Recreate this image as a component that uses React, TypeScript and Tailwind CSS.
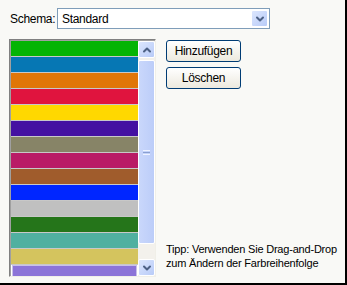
import { ChevronDown, ChevronUp } from 'lucide-react'

const colors = [
  '#04b404',
  '#0677b4',
  '#e07608',
  '#e0143e',
  '#ffd800',
  '#4410a2',
  '#878467',
  '#b91b66',
  '#a05c2c',
  '#0026ff',
  '#c0c0c0',
  '#25751a',
  '#50b0a0',
  '#d4c45e',
  '#8c74d8',
]

const XpButton = ({ label }: { label: string }) => (
  <button className="flex h-[22px] w-[75px] items-center justify-center rounded-[3px] border border-[#003c74] bg-gradient-to-b from-white to-[#ece9de] text-[12px] tracking-[-0.3px] text-black">
    {label}
  </button>
)

const ArrowBox = ({ down }: { down?: boolean }) => (
  <div className="flex h-[17px] w-[17px] shrink-0 items-center justify-center rounded-[2px] border border-white bg-gradient-to-br from-[#dce6fd] to-[#b8cbf8]">
    {down ? (
      <ChevronDown className="size-3 text-[#4d6185]" strokeWidth={4} />
    ) : (
      <ChevronUp className="size-3 text-[#4d6185]" strokeWidth={4} />
    )}
  </div>
)

export default function App() {
  return (
    <div
      className="flex h-[285px] w-[347px] flex-col border-b-2 border-r-2 border-black bg-[#f9f9f6] text-[12px] text-black"
      style={{ fontFamily: '"Liberation Sans", Arial, sans-serif' }}
    >
      <div className="flex items-center pl-[10px] pt-[8px]">
        <span className="w-[47px] tracking-[-0.3px]">Schema:</span>
        <div className="flex h-[21px] w-[213px] items-center border border-[#7f9db9] bg-white pl-[4px] pr-px">
          <span className="flex-1 tracking-[-0.3px]">Standard</span>
          <ArrowBox down />
        </div>
      </div>
      <div className="flex pl-[9px] pt-[10px]">
        <div className="flex h-[238px] w-[147px] border border-b-[#f0efe8] border-l-[#808080] border-r-[#f0efe8] border-t-[#808080] bg-white">
          <div className="flex flex-1 flex-col overflow-hidden border-l border-t border-l-[#a0a0a0] border-t-[#a0a0a0]">
            <div className="flex flex-1 overflow-hidden bg-white">
              <div className="flex flex-1 flex-col">
                {colors.map((c, i) => (
                  <div
                    key={c}
                    className={
                      i === colors.length - 1
                        ? 'mx-px h-[16px] shrink-0 border border-[#c8c0e8]'
                        : 'h-[16px] shrink-0 border-b border-[#c8c8c8]'
                    }
                    style={{ backgroundColor: c }}
                  />
                ))}
              </div>
              <div className="flex w-[17px] flex-col bg-[#f3f1ec]">
                <ArrowBox />
                <div className="mt-[2px] flex h-[184px] items-center justify-center rounded-[2px] border border-white bg-gradient-to-r from-[#c9d7fb] to-[#bccdf9]">
                  <div className="flex flex-col gap-px">
                    <div className="h-px w-[7px] bg-[#eef3ff]" />
                    <div className="h-px w-[7px] bg-[#8aa0d0]" />
                    <div className="h-px w-[7px] bg-[#eef3ff]" />
                  </div>
                </div>
                <div className="flex-1" />
                <ArrowBox down />
              </div>
            </div>
          </div>
        </div>
        <div className="flex flex-1 flex-col pl-[10px]">
          <div className="flex flex-col gap-[5px] pt-px">
            <XpButton label="Hinzufügen" />
            <XpButton label="Löschen" />
          </div>
          <div className="flex-1" />
          <div className="whitespace-nowrap pb-[7px] text-[11px] leading-[14px] tracking-[-0.2px]">
            Tipp: Verwenden Sie Drag-and-Drop
            <br />
            zum Ändern der Farbreihenfolge
          </div>
        </div>
      </div>
    </div>
  )
}
